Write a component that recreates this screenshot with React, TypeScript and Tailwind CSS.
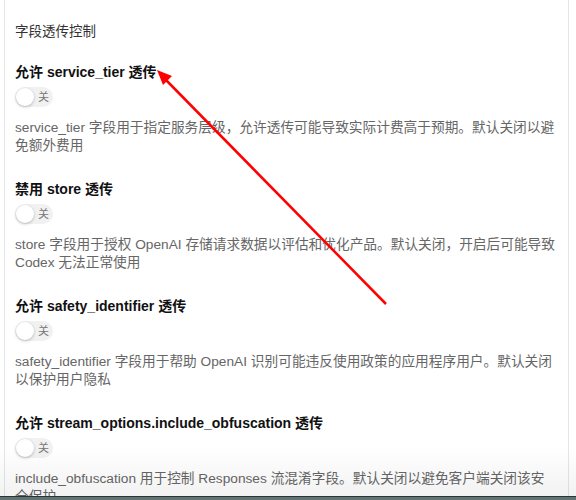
const sections = [
  {
    title: '允许 service_tier 透传',
    desc: 'service_tier 字段用于指定服务层级，允许透传可能导致实际计费高于预期。默认关闭以避免额外费用',
  },
  {
    title: '禁用 store 透传',
    desc: 'store 字段用于授权 OpenAI 存储请求数据以评估和优化产品。默认关闭，开启后可能导致 Codex 无法正常使用',
  },
  {
    title: '允许 safety_identifier 透传',
    desc: 'safety_identifier 字段用于帮助 OpenAI 识别可能违反使用政策的应用程序用户。默认关闭以保护用户隐私',
  },
  {
    title: '允许 stream_options.include_obfuscation 透传',
    desc: 'include_obfuscation 用于控制 Responses 流混淆字段。默认关闭以避免客户端关闭该安全保护',
  },
]

function Toggle() {
  return (
    <div className="mt-[5px] flex h-[20px] w-[38px] items-center rounded-full bg-[#f1f1f1]">
      <div className="h-[18px] w-[18px] ml-[1px] rounded-full bg-white shadow-[0_1px_3px_rgba(0,0,0,0.25)]" />
      <span className="ml-[4px] text-[11px] leading-none text-[#777]">关</span>
    </div>
  )
}

export default function App() {
  return (
    <div
      className="relative flex h-[500px] w-[576px] flex-col overflow-hidden bg-white"
      style={{ fontFamily: '"Liberation Sans", "Noto Sans CJK SC", sans-serif' }}
    >
      <div className="ml-[4px] mr-[7px] flex-1 border-x border-[#e6e6e6] pl-[10px] pr-[11px] pt-[22px]">
        <div className="text-[13.5px] leading-[20px] text-[#333]">字段透传控制</div>
        <div className="mt-[20px] flex flex-col gap-[24px]">
          {sections.map((s) => (
            <div key={s.title}>
              <div className="text-[14px] font-bold leading-[20px] text-[#111]">{s.title}</div>
              <Toggle />
              <p className="mt-[12px] text-[13.7px] leading-[18px] text-[#666]">{s.desc}</p>
            </div>
          ))}
        </div>
      </div>

      <div className="pointer-events-none absolute inset-x-0 bottom-[4px] h-[50px] bg-gradient-to-b from-transparent to-[rgba(0,0,0,0.05)]" />
      <div className="absolute inset-x-0 bottom-0 h-[4px] border-t border-[#2c3434] bg-[#5f7473]" />

      <svg className="pointer-events-none absolute left-0 top-0" width="576" height="500" viewBox="0 0 576 500">
        <line x1="386" y1="304" x2="165" y2="79" stroke="#ff0000" strokeWidth="2.5" />
        <polygon points="157,70 172,76 163,85" fill="#ff0000" />
      </svg>
    </div>
  )
}
